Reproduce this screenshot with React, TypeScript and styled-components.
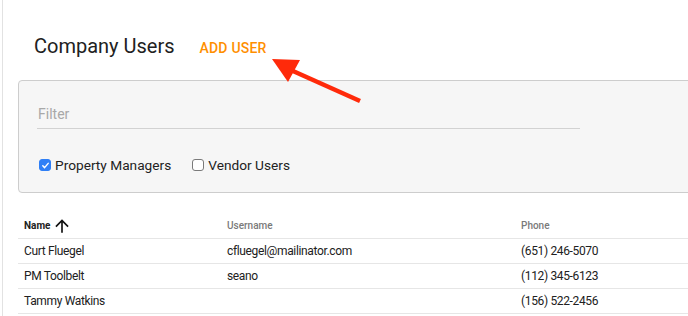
import styled, { createGlobalStyle } from "styled-components";

const GlobalStyle = createGlobalStyle`
  html, body {
    margin: 0;
    padding: 0;
    background: #fff;
    overflow: hidden;
  }
  body {
    font-family: Roboto, "Liberation Sans", sans-serif;
    color: #212121;
  }
`;

const users = [
  { name: "Curt Fluegel", username: "cfluegel@mailinator.com", phone: "(651) 246-5070" },
  { name: "PM Toolbelt", username: "seano", phone: "(112) 345-6123" },
  { name: "Tammy Watkins", username: "", phone: "(156) 522-2456" },
];

const App = () => {
  return (
    <>
      <GlobalStyle />
      <Page>
        <Card>
          <Header>
            <Title>Company Users</Title>
            <AddButton>ADD USER</AddButton>
          </Header>

          <FilterPanel>
            <FilterField>
              <FilterInput placeholder="Filter" />
            </FilterField>
            <CheckRow>
              <CheckLabel>
                <Box $checked>
                  <svg width="9" height="9" viewBox="0 0 10 10">
                    <path d="M2 5.2l2 2.2L8 2.6" fill="none" stroke="#fff" strokeWidth="1.6" strokeLinecap="round" strokeLinejoin="round" />
                  </svg>
                </Box>
                Property Managers
              </CheckLabel>
              <CheckLabel>
                <Box />
                Vendor Users
              </CheckLabel>
            </CheckRow>
          </FilterPanel>

          <Table>
            <HeadRow>
              <HeadCell $active>
                Name
                <svg width="20" height="20" viewBox="0 0 24 24">
                  <path d="M4 12l1.41 1.41L11 7.83V20h2V7.83l5.58 5.59L20 12l-8-8-8 8z" fill="#111" />
                </svg>
              </HeadCell>
              <HeadCell>Username</HeadCell>
              <HeadCell>Phone</HeadCell>
            </HeadRow>
            {users.map((u) => (
              <Row key={u.name}>
                <Cell>{u.name}</Cell>
                <Cell>{u.username}</Cell>
                <Cell>{u.phone}</Cell>
              </Row>
            ))}
          </Table>
        </Card>

        <Annotation width="688" height="316" viewBox="0 0 688 316">
          <line x1="360" y1="101" x2="284" y2="67" stroke="#ff2a0a" strokeWidth="4.5" />
          <polygon points="272,59 300,60 288,82" fill="#ff2a0a" />
        </Annotation>
      </Page>
    </>
  );
};

export default App;

const Page = styled.div`
  position: relative;
  width: 688px;
  height: 316px;
  overflow: hidden;
`;

const Card = styled.div`
  margin-left: 2px;
  width: 740px;
  min-height: 316px;
  border-left: 1px solid #e2e2e2;
  padding-left: 15px;
  box-sizing: border-box;
`;

const Header = styled.div`
  display: flex;
  align-items: baseline;
  gap: 25px;
  height: 80px;
  padding: 34px 0 0 16px;
  box-sizing: border-box;
`;

const Title = styled.h1`
  margin: 0;
  font-size: 20px;
  line-height: 24px;
  font-weight: 400;
  color: #212121;
`;

const AddButton = styled.button`
  border: none;
  background: none;
  padding: 0;
  font-family: inherit;
  font-size: 14px;
  font-weight: 500;
  letter-spacing: 0.2px;
  color: #ff8f00;
  cursor: pointer;
`;

const FilterPanel = styled.div`
  width: 720px;
  background: #f6f6f6;
  border: 1px solid #cdcdcd;
  border-radius: 4px;
  padding: 23px 0 17px 18px;
  box-sizing: border-box;
`;

const FilterField = styled.div`
  width: 543px;
  border-bottom: 1px solid #d2d2d2;
  padding-bottom: 4px;
`;

const FilterInput = styled.input`
  display: block;
  width: 100%;
  border: none;
  background: transparent;
  padding: 0 0 0 1px;
  font-family: inherit;
  font-size: 14px;
  line-height: 20px;
  height: 20px;
  color: #212121;
  outline: none;
  &::placeholder {
    color: #a8a8a8;
  }
`;

const CheckRow = styled.div`
  display: flex;
  align-items: center;
  gap: 21px;
  margin-top: 26px;
  padding-left: 2px;
  height: 20px;
`;

const CheckLabel = styled.label`
  display: flex;
  align-items: center;
  gap: 4px;
  font-size: 13.7px;
  color: #222;
`;

const Box = styled.span<{ $checked?: boolean }>`
  display: inline-flex;
  align-items: center;
  justify-content: center;
  width: 12px;
  height: 12px;
  border-radius: 3px;
  box-sizing: border-box;
  background: ${(p) => (p.$checked ? "#2f7ff6" : "#fff")};
  border: 1px solid ${(p) => (p.$checked ? "#2f7ff6" : "#7a7a7a")};
`;

const Table = styled.div`
  margin-top: 20px;
  width: 720px;
`;

const HeadRow = styled.div`
  display: grid;
  grid-template-columns: 203px 294px 1fr;
  height: 25px;
  border-bottom: 1px solid #e6e6e6;
  align-items: center;
`;

const HeadCell = styled.div<{ $active?: boolean }>`
  display: flex;
  align-items: center;
  gap: 2px;
  padding-left: 6px;
  font-size: 10px;
  font-weight: ${(p) => (p.$active ? 700 : 500)};
  color: ${(p) => (p.$active ? "#212121" : "#7a7a7a")};
`;

const Row = styled.div`
  display: grid;
  grid-template-columns: 203px 294px 1fr;
  height: 24px;
  border-bottom: 1px solid #e6e6e6;
  align-items: center;
`;

const Cell = styled.div`
  padding-left: 6px;
  font-size: 12px;
  letter-spacing: -0.35px;
  color: #212121;
`;

const Annotation = styled.svg`
  position: absolute;
  left: 0;
  top: 0;
  pointer-events: none;
`;
